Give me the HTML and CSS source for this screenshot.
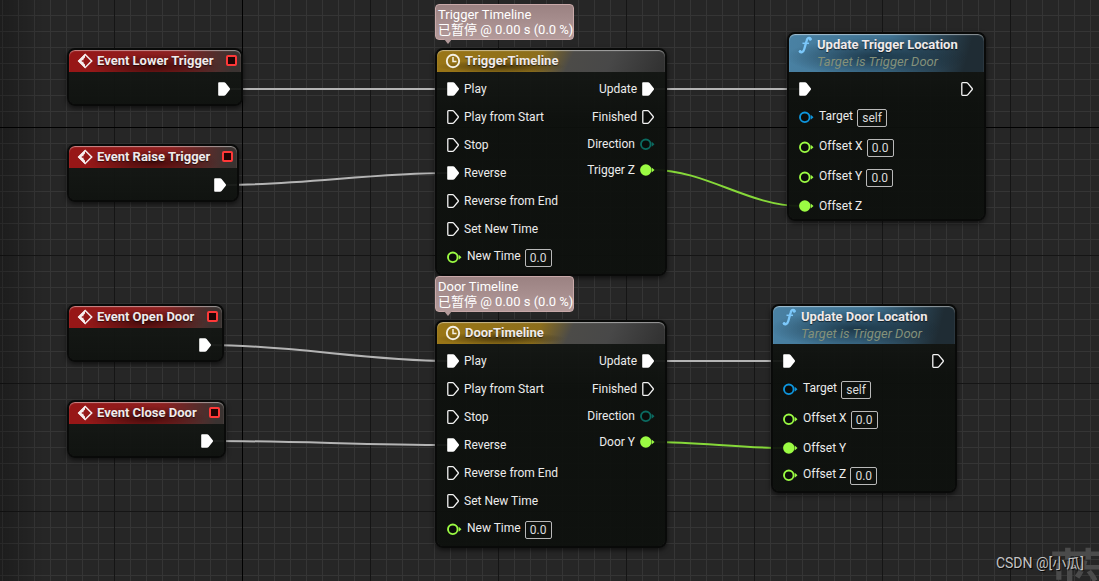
FILE: index.html
```html
<!DOCTYPE html>
<html lang="zh-CN">
<head>
<meta charset="utf-8">
<title>Blueprint Event Graph</title>
<link rel="stylesheet" href="styles.css">
</head>
<body>
<svg class="defs" aria-hidden="true">
  <defs>
    <symbol id="exec-on" viewBox="0 0 13 16"><path d="M1 1.200H6Q7 1.200 7.600 2L11.800 7.300Q12.300 8 11.800 8.700L7.600 14Q7 14.800 6 14.800H1Q.2 14.800 .2 14V2Q.2 1.200 1 1.200Z" fill="#fff"/></symbol>
    <symbol id="exec-off" viewBox="0 0 13 16"><path d="M1.500 1.700H5.500Q6.300 1.700 6.900 2.400L11.200 7.500Q11.600 8 11.200 8.500L6.900 13.600Q6.300 14.300 5.500 14.300H1.500Q.8 14.300 .8 13.600V2.400Q.8 1.700 1.500 1.700Z" fill="#0a0c0a" stroke="#f4f4f4" stroke-width="1.300"/></symbol>
    <symbol id="data-off" viewBox="0 0 15 14"><circle cx="5.800" cy="7.300" r="4.800" fill="#0a0c0a" stroke="currentColor" stroke-width="1.900"/><path d="M11.700 4.800L14.500 7.300L11.700 9.800Z" fill="currentColor"/></symbol>
    <symbol id="data-on" viewBox="0 0 15 14"><circle cx="5.800" cy="7" r="5.700" fill="currentColor"/><path d="M11.700 4.500L14.500 7L11.700 9.500Z" fill="currentColor"/></symbol>
    <symbol id="event" viewBox="0 0 16 16"><path d="M8.200 1.500L14.700 8L8.200 14.500L1.700 8Z" fill="none" stroke="#f6eeee" stroke-width="1.500"/><path d="M8 1L1 8L8 15V11.500L6.500 10V8.800H4.800V7.200H6.500V6L8 4.500Z" fill="#f6eeee"/></symbol>
    <symbol id="clock" viewBox="0 0 16 16"><circle cx="8" cy="8" r="6.200" fill="none" stroke="#f4f0e4" stroke-width="1.900"/><path d="M8 4V8.500H11.500" fill="none" stroke="#f4f0e4" stroke-width="1.500"/></symbol>
    <symbol id="func" viewBox="0 0 14 18"><path d="M12.800 3.800C12.800 1 9.500 1.200 8.700 4.500L6.300 13C5.500 16.300 2.500 17.200 1.500 15" fill="none" stroke="#7cc8fa" stroke-width="2.300"/><circle cx="12.200" cy="3.500" r="1.300" fill="#7cc8fa"/><circle cx="2.200" cy="15.200" r="1.300" fill="#7cc8fa"/><path d="M4.500 7.300H11" stroke="#7cc8fa" stroke-width="1.500"/></symbol>
  </defs>
</svg>

<main class="graph">
  <div class="backdrop" aria-hidden="true">蓝</div>

  <svg class="wires" aria-hidden="true">
    <g class="exec-wire">
      <path d="M230 89H448"/>
      <path d="M226 185C300 185 374 173 448 173"/>
      <path d="M211 345C290 345 369 361 448 361"/>
      <path d="M213 441C291 441 370 445 448 445"/>
      <path d="M655 89H800"/>
      <path d="M655 361H784"/>
    </g>
    <g class="float-wire">
      <path d="M654 170C705 170 749 206 800 206"/>
      <path d="M654 442C698 442 740 448 784 448"/>
    </g>
  </svg>

  <section class="node event lower">
    <header><svg class="ico"><use href="#event"/></svg><h2>Event Lower Trigger</h2><i class="delegate"></i></header>
    <div class="pins"><div class="col out"><div class="pin"><svg class="exec"><use href="#exec-on"/></svg></div></div></div>
  </section>
  <section class="node event raise">
    <header><svg class="ico"><use href="#event"/></svg><h2>Event Raise Trigger</h2><i class="delegate"></i></header>
    <div class="pins"><div class="col out"><div class="pin"><svg class="exec"><use href="#exec-on"/></svg></div></div></div>
  </section>
  <section class="node event open">
    <header><svg class="ico"><use href="#event"/></svg><h2>Event Open Door</h2><i class="delegate"></i></header>
    <div class="pins"><div class="col out"><div class="pin"><svg class="exec"><use href="#exec-on"/></svg></div></div></div>
  </section>
  <section class="node event close">
    <header><svg class="ico"><use href="#event"/></svg><h2>Event Close Door</h2><i class="delegate"></i></header>
    <div class="pins"><div class="col out"><div class="pin"><svg class="exec"><use href="#exec-on"/></svg></div></div></div>
  </section>

  <section class="node timeline t1">
    <header><svg class="ico"><use href="#clock"/></svg><h2>TriggerTimeline</h2></header>
    <div class="pins">
      <div class="col">
        <div class="pin"><svg class="exec"><use href="#exec-on"/></svg><span>Play</span></div>
        <div class="pin"><svg class="exec"><use href="#exec-off"/></svg><span>Play from Start</span></div>
        <div class="pin"><svg class="exec"><use href="#exec-off"/></svg><span>Stop</span></div>
        <div class="pin"><svg class="exec"><use href="#exec-on"/></svg><span>Reverse</span></div>
        <div class="pin"><svg class="exec"><use href="#exec-off"/></svg><span>Reverse from End</span></div>
        <div class="pin"><svg class="exec"><use href="#exec-off"/></svg><span>Set New Time</span></div>
        <div class="pin field"><svg class="data float"><use href="#data-off"/></svg><label for="time1">New Time</label><input id="time1" value="0.0"></div>
      </div>
      <div class="col out">
        <div class="pin"><span>Update</span><svg class="exec"><use href="#exec-on"/></svg></div>
        <div class="pin"><span>Finished</span><svg class="exec"><use href="#exec-off"/></svg></div>
        <div class="pin value"><span>Direction</span><svg class="data enum"><use href="#data-off"/></svg></div>
        <div class="pin value"><span>Trigger Z</span><svg class="data float"><use href="#data-on"/></svg></div>
      </div>
    </div>
  </section>
  <section class="node timeline t2">
    <header><svg class="ico"><use href="#clock"/></svg><h2>DoorTimeline</h2></header>
    <div class="pins">
      <div class="col">
        <div class="pin"><svg class="exec"><use href="#exec-on"/></svg><span>Play</span></div>
        <div class="pin"><svg class="exec"><use href="#exec-off"/></svg><span>Play from Start</span></div>
        <div class="pin"><svg class="exec"><use href="#exec-off"/></svg><span>Stop</span></div>
        <div class="pin"><svg class="exec"><use href="#exec-on"/></svg><span>Reverse</span></div>
        <div class="pin"><svg class="exec"><use href="#exec-off"/></svg><span>Reverse from End</span></div>
        <div class="pin"><svg class="exec"><use href="#exec-off"/></svg><span>Set New Time</span></div>
        <div class="pin field"><svg class="data float"><use href="#data-off"/></svg><label for="time2">New Time</label><input id="time2" value="0.0"></div>
      </div>
      <div class="col out">
        <div class="pin"><span>Update</span><svg class="exec"><use href="#exec-on"/></svg></div>
        <div class="pin"><span>Finished</span><svg class="exec"><use href="#exec-off"/></svg></div>
        <div class="pin value"><span>Direction</span><svg class="data enum"><use href="#data-off"/></svg></div>
        <div class="pin value"><span>Door Y</span><svg class="data float"><use href="#data-on"/></svg></div>
      </div>
    </div>
  </section>

  <section class="node function f1">
    <header><svg class="ico"><use href="#func"/></svg><div><h2>Update Trigger Location</h2><p>Target is Trigger Door</p></div></header>
    <div class="pins">
      <div class="col">
        <div class="pin"><svg class="exec"><use href="#exec-on"/></svg></div>
        <div class="pin field"><svg class="data object"><use href="#data-off"/></svg><label for="self1">Target</label><input id="self1" class="self" value="self" readonly></div>
        <div class="pin field"><svg class="data float"><use href="#data-off"/></svg><label for="x1">Offset X</label><input id="x1" value="0.0"></div>
        <div class="pin field"><svg class="data float"><use href="#data-off"/></svg><label for="y1">Offset Y</label><input id="y1" value="0.0"></div>
        <div class="pin value"><svg class="data float"><use href="#data-on"/></svg><span>Offset Z</span></div>
      </div>
      <div class="col out"><div class="pin"><svg class="exec"><use href="#exec-off"/></svg></div></div>
    </div>
  </section>
  <section class="node function f2">
    <header><svg class="ico"><use href="#func"/></svg><div><h2>Update Door Location</h2><p>Target is Trigger Door</p></div></header>
    <div class="pins">
      <div class="col">
        <div class="pin"><svg class="exec"><use href="#exec-on"/></svg></div>
        <div class="pin field"><svg class="data object"><use href="#data-off"/></svg><label for="self2">Target</label><input id="self2" class="self" value="self" readonly></div>
        <div class="pin field"><svg class="data float"><use href="#data-off"/></svg><label for="x2">Offset X</label><input id="x2" value="0.0"></div>
        <div class="pin value"><svg class="data float"><use href="#data-on"/></svg><span>Offset Y</span></div>
        <div class="pin field"><svg class="data float"><use href="#data-off"/></svg><label for="z2">Offset Z</label><input id="z2" value="0.0"></div>
      </div>
      <div class="col out"><div class="pin"><svg class="exec"><use href="#exec-off"/></svg></div></div>
    </div>
  </section>

  <div class="bubble b1">Trigger Timeline<br>已暂停 @ 0.00 s (0.0 %)</div>
  <div class="bubble b2">Door Timeline<br>已暂停 @ 0.00 s (0.0 %)</div>
  <div class="credit">CSDN @[小瓜]</div>
</main>
</body>
</html>
```
FILE: styles.css
```css
* { box-sizing: border-box; }
body { margin: 0; background: #262626; font-family: Roboto, "Noto Sans CJK SC", sans-serif; font-size: 12px; color: #ececec; }
h2, p { margin: 0; }
svg { display: block; flex: none; }
.defs { position: absolute; width: 0; height: 0; }

.graph {
  position: relative;
  height: 100vh;
  overflow: hidden;
  background:
    linear-gradient(90deg, rgba(0,0,0,.25), transparent 44px),
    linear-gradient(#000, #000) 242px 0 / 1px 100% no-repeat,
    linear-gradient(#000, #000) 0 127px / 100% 1px no-repeat,
    linear-gradient(90deg, #151515 1px, transparent 1px) 114px 0 / 128px 128px,
    linear-gradient(#151515 1px, transparent 1px) 0 127px / 128px 128px,
    linear-gradient(90deg, #353535 1px, transparent 1px) 2px 0 / 16px 16px,
    linear-gradient(#353535 1px, transparent 1px) 0 15px / 16px 16px,
    #262626;
}
.backdrop { position: absolute; left: 1049px; top: 543px; font: 500 58px/58px "Noto Sans CJK SC", sans-serif; color: #4b4b4b; white-space: nowrap; }
.wires { position: absolute; inset: 0; width: 100%; height: 100%; fill: none; }
.exec-wire { stroke: #b4b4b4; stroke-width: 2; }
.float-wire { stroke: #86d839; stroke-width: 2; }

.node { position: absolute; border: 2px solid #090a09; border-radius: 8px; background: linear-gradient(rgba(22,25,22,.94), rgba(13,16,13,.94) 70px); background-clip: padding-box; box-shadow: 0 2px 5px rgba(0,0,0,.6); }
.node header { display: flex; align-items: center; gap: 4px; height: 22px; padding: 0 4px 0 8px; border-radius: 6px 6px 0 0; box-shadow: inset 0 1px 1px rgba(255,255,255,.5); }
.node h2 { font-size: 13px; font-weight: 700; line-height: 18px; color: #f0eaea; text-shadow: 0 1px 1px rgba(0,0,0,.6); white-space: nowrap; }
.ico { width: 16px; height: 16px; }
.event header { background: radial-gradient(ellipse at 50% 75%, rgba(30,0,0,.65), transparent 55%), linear-gradient(95deg, #981616, #8c2020 60%, #3a3331 95%); }
.timeline header { background: radial-gradient(ellipse at 28% 75%, rgba(30,20,0,.6), transparent 28%), linear-gradient(115deg, #9a7616, #8c6e1c 44%, #4c4b48 58%, #484848 75%, #303030); }
.function header { align-items: flex-start; gap: 5px; height: 38px; padding: 2px 8px 0 9px; background: radial-gradient(ellipse at 45% 60%, rgba(10,25,35,.65), transparent 60%), linear-gradient(105deg, #4a82a4, #3f7190 50%, #1f2c34 90%); }
.function .ico { width: 14px; height: 18px; }
.function p { font-size: 13px; line-height: 16px; font-style: italic; color: #84917a; white-space: nowrap; }
.delegate { width: 11px; height: 11px; margin: -2px 0 0 auto; border: 2px solid #ff3838; border-radius: 2px; background: #200404; }

.pins { display: flex; justify-content: space-between; padding: 3px 10px 1px; }
.function .pins { padding-bottom: 0; }
.event .pins { justify-content: flex-end; padding-right: 5px; }
.pin { display: flex; align-items: center; gap: 4px; height: 28px; white-space: nowrap; }
.out .pin { justify-content: flex-end; gap: 5px; }
.event .pin { padding-right: 5px; }
.pin.value { height: 26px; }
.pin.field { height: 30px; align-items: flex-start; }
.field svg { margin-top: 7px; }
.field label { line-height: 26px; }
.field input { margin-top: 6px; }
.exec { width: 13px; height: 16px; }
.data { width: 15px; height: 14px; }
.pin .data + * { margin-left: 1px; }
.float { color: #9bfb43; }
.enum { color: #0b6a60; }
.object { color: #0e95dd; }
.pin input { width: 27px; height: 18px; padding: 0; border: 1px solid #b9b9b9; border-radius: 2px; background: transparent; color: #dcdcdc; font: inherit; text-align: center; }
.pin input.self { width: 30px; }

.lower { left: 67px; top: 48px; width: 176px; }
.raise { left: 67px; top: 144px; width: 172px; }
.open { left: 67px; top: 304px; width: 157px; }
.close { left: 67px; top: 400px; width: 159px; }
.t1 { left: 435px; top: 48px; width: 232px; }
.t2 { left: 435px; top: 320px; width: 232px; }
.f1 { left: 787px; top: 32px; width: 199px; }
.f2 { left: 771px; top: 304px; width: 186px; }

.bubble { position: absolute; left: 435px; padding: 2px 0 2px 2px; border: 1px solid #c9a9a9; border-radius: 4px; background: linear-gradient(#9b8282, #b39a9a); font-size: 13px; line-height: 15px; color: #fff; white-space: nowrap; }
.bubble::after { content: ""; position: absolute; left: 8px; top: 100%; border: 4px solid transparent; border-top: 5px solid #b39a9a; border-bottom: 0; }
.b1 { top: 4px; }
.b2 { top: 276px; }
.credit { position: absolute; right: 15px; bottom: 8px; font-size: 14px; line-height: 20px; color: #c4c4c4; text-shadow: 1px 1px 1px #000; }
```
